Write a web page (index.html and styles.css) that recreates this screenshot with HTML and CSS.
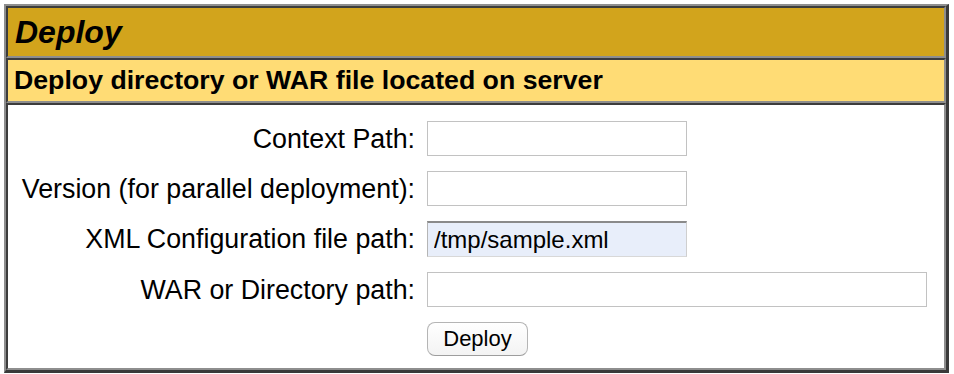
FILE: index.html
```html
<!DOCTYPE html>
<html>
<head>
<meta charset="utf-8">
<link rel="stylesheet" href="styles.css">
</head>
<body>
<div class="panel">
  <div class="cell title">Deploy</div>
  <div class="cell subhead">Deploy directory or WAR file located on server</div>
  <div class="cell body-cell">
    <form class="form-grid">
      <label class="lbl">Context Path:</label>
      <input class="field short" type="text">
      <label class="lbl">Version (for parallel deployment):</label>
      <input class="field short" type="text">
      <label class="lbl">XML Configuration file path:</label>
      <input class="field short filled" type="text" value="/tmp/sample.xml">
      <label class="lbl">WAR or Directory path:</label>
      <input class="field long" type="text">
      <span class="lbl"></span>
      <div class="btn-wrap"><button class="btn" type="button">Deploy</button></div>
    </form>
  </div>
</div>
</body>
</html>
```
FILE: styles.css
```css
html, body {
  margin: 0;
  padding: 0;
  background: #ffffff;
}
body {
  font-family: "Liberation Sans", Arial, sans-serif;
  color: #000;
}
.panel {
  margin: 4px 0 0 4px;
  width: 945px;
  box-sizing: border-box;
  border-style: solid;
  border-width: 2px 3px 3px 2px;
  border-color: #8e8e8e #3a3a3a #3a3a3a #8e8e8e;
}
.cell {
  border-style: solid;
  border-width: 2px;
  border-color: #3c3c3c #8e8e8e #8e8e8e #3c3c3c;
}
.title {
  background: #D2A41C;
  font-size: 32px;
  font-weight: bold;
  font-style: italic;
  line-height: 36px;
  padding: 6px 6px 6px 7px;
}
.subhead {
  background: #FFDC75;
  font-size: 26.7px;
  font-weight: bold;
  line-height: 29px;
  padding: 6px 6px;
}
.body-cell {
  background: #fff;
  padding: 16px 13px 12px 13px;
}
.form-grid {
  display: grid;
  grid-template-columns: 394px auto;
  column-gap: 12px;
  row-gap: 15px;
  align-items: center;
  justify-content: start;
  margin: 0;
}
.lbl {
  text-align: right;
  font-size: 26.8px;
  line-height: 30px;
  white-space: nowrap;
}
.field {
  box-sizing: border-box;
  height: 35px;
  margin: 0;
  border: 1px solid #c2c2c2;
  background: #fff;
  font-family: "Liberation Sans", Arial, sans-serif;
  font-size: 24px;
  padding: 0 6px;
  color: #000;
  outline: none;
}
.short { width: 260px; }
.long { width: 500px; }
.filled {
  background: #e8eefa;
  border-top: 2px solid #8a8a8a;
  border-left: 1px solid #b5b5b5;
  border-right: 1px solid #cfcfcf;
  border-bottom: 1px solid #d8d8d8;
  height: 36px;
}
.btn-wrap {
  display: flex;
}
.btn {
  box-sizing: border-box;
  width: 101px;
  height: 34px;
  margin: 0;
  border: 1px solid #b5b5b5;
  border-bottom-color: #9d9d9d;
  border-radius: 8px;
  background: linear-gradient(#ffffff, #f3f3f3);
  font-family: "Liberation Sans", Arial, sans-serif;
  font-size: 22px;
  color: #000;
  padding: 0;
}
```
